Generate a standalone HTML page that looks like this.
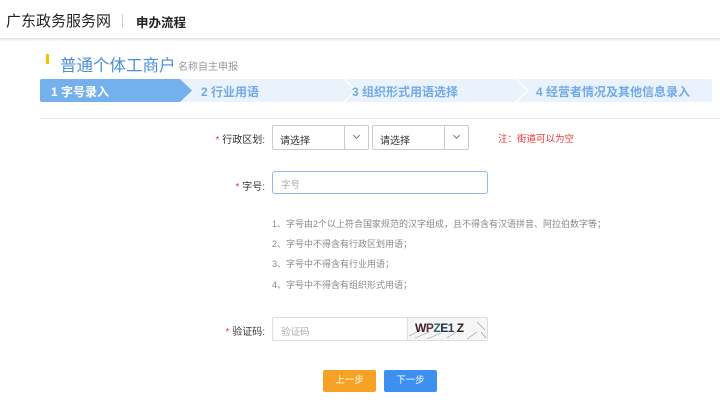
<!DOCTYPE html><html><head><meta charset="utf-8"><style>
*{margin:0;padding:0;box-sizing:border-box}
body{width:720px;height:404px;background:#fff;font-family:"Liberation Sans","Noto Sans CJK SC",sans-serif;position:relative;overflow:hidden}
.a{position:absolute;white-space:nowrap}
.sel{position:absolute;height:25px;border:1px solid #ccc;border-radius:2px;font-size:10px;color:#333;padding:6px 0 0 7px}
.sel i{position:absolute;right:0;top:0;width:24px;height:23px;border-left:1px solid #ccc}
.sel i:after{content:"";position:absolute;left:9px;top:7px;width:4px;height:4px;border-right:1px solid #777;border-bottom:1px solid #777;transform:rotate(45deg)}
.lbl{font-size:10px;color:#333;text-align:right;width:80px}
.lbl b{color:#e33;font-weight:normal}
.note{font-size:9px;color:#888;left:272px}
</style></head><body>
<div class="a" style="left:6px;top:10px;font-size:15px;color:#222">广东政务服务网</div>
<div class="a" style="left:122px;top:14px;width:1px;height:14px;background:#ccc"></div>
<div class="a" style="left:136px;top:12px;font-size:12.5px;font-weight:bold;color:#222">申办流程</div>
<div class="a" style="left:0;top:38px;width:720px;height:3px;background:linear-gradient(#e4e4e4,#f8f8f8)"></div>
<div class="a" style="left:46px;top:54px;width:3px;height:10px;background:#f5c000"></div>
<div class="a" style="left:60px;top:52px;font-size:16.5px;color:#4a8fd8">普通个体工商户</div>
<div class="a" style="left:178px;top:58px;font-size:10px;color:#999">名称自主申报</div>
<svg class="a" style="left:40px;top:79px" width="672" height="23">
<rect x="0" y="0" width="672" height="23" rx="2" fill="#eaf3fc"/>
<polyline points="304,0 316,11.5 304,23" fill="none" stroke="#fff" stroke-width="1.5"/>
<polyline points="476,0 488,11.5 476,23" fill="none" stroke="#fff" stroke-width="1.5"/>
<path d="M2,0 H140 L152,11.5 L140,23 H2 Q0,23 0,21 V2 Q0,0 2,0Z" fill="#74b0ec"/>
</svg>
<div class="a" style="left:51px;top:83px;font-size:12px;font-weight:bold;color:#fff">1 字号录入</div>
<div class="a" style="left:201px;top:83px;font-size:12px;font-weight:bold;color:#72aae6">2 行业用语</div>
<div class="a" style="left:352px;top:83px;font-size:12px;font-weight:bold;color:#72aae6">3 组织形式用语选择</div>
<div class="a" style="left:536px;top:83px;font-size:12px;font-weight:bold;color:#72aae6">4 经营者情况及其他信息录入</div>
<div class="a" style="left:40px;top:118px;width:680px;height:1px;background:#e6e6e6"></div>
<div class="a lbl" style="left:185px;top:131px"><b>*</b> 行政区划:</div>
<div class="sel" style="left:272px;top:125px;width:97px">请选择<i></i></div>
<div class="sel" style="left:372px;top:125px;width:97px">请选择<i></i></div>
<div class="a" style="left:498px;top:131px;font-size:9.5px;color:#e33">注：街道可以为空</div>
<div class="a lbl" style="left:185px;top:178px"><b>*</b> 字号:</div>
<div class="a" style="left:272px;top:171px;width:216px;height:23px;border:1px solid #8fb9e6;border-radius:3px;font-size:9.5px;color:#aaa;padding:5px 0 0 8px">字号</div>
<div class="a note" style="top:217px">1、字号由2个以上符合国家规范的汉字组成，且不得含有汉语拼音、阿拉伯数字等；</div>
<div class="a note" style="top:237px">2、字号中不得含有行政区划用语；</div>
<div class="a note" style="top:257px">3、字号中不得含有行业用语；</div>
<div class="a note" style="top:278px">4、字号中不得含有组织形式用语；</div>
<div class="a lbl" style="left:185px;top:323px"><b>*</b> 验证码:</div>
<div class="a" style="left:272px;top:317px;width:216px;height:24px;border:1px solid #ddd;border-radius:2px;font-size:9.5px;color:#aaa;padding:6px 0 0 8px">验证码</div>
<div class="a" style="left:407px;top:318px;width:80px;height:22px;background:#f6f6f6;border-left:1px solid #ddd"></div>
<svg class="a" style="left:407px;top:318px" width="80" height="22"><path d="M2,18 L14,12 M8,20 L22,14 M20,21 L34,15 M40,20 L52,12 M60,21 L70,14 M70,4 L78,12 M74,14 L79,20" stroke="#999" stroke-width="0.6" fill="none"/></svg>
<div class="a" style="left:415px;top:321px;font-size:12px;font-weight:bold;letter-spacing:-0.5px;color:#402030">W<span style="color:#603040">P</span><span style="color:#2a6a5a">Z</span><span style="color:#203050">E</span><span style="color:#304050">1</span> <span style="color:#222">Z</span></div>
<div class="a" style="left:323px;top:370px;width:53px;height:22px;background:#f7a224;border-radius:2px;color:#fff;font-size:9.5px;text-align:center;line-height:22px">上一步</div>
<div class="a" style="left:384px;top:370px;width:53px;height:22px;background:#3d90f0;border-radius:2px;color:#fff;font-size:9.5px;text-align:center;line-height:22px">下一步</div>
</body></html>
